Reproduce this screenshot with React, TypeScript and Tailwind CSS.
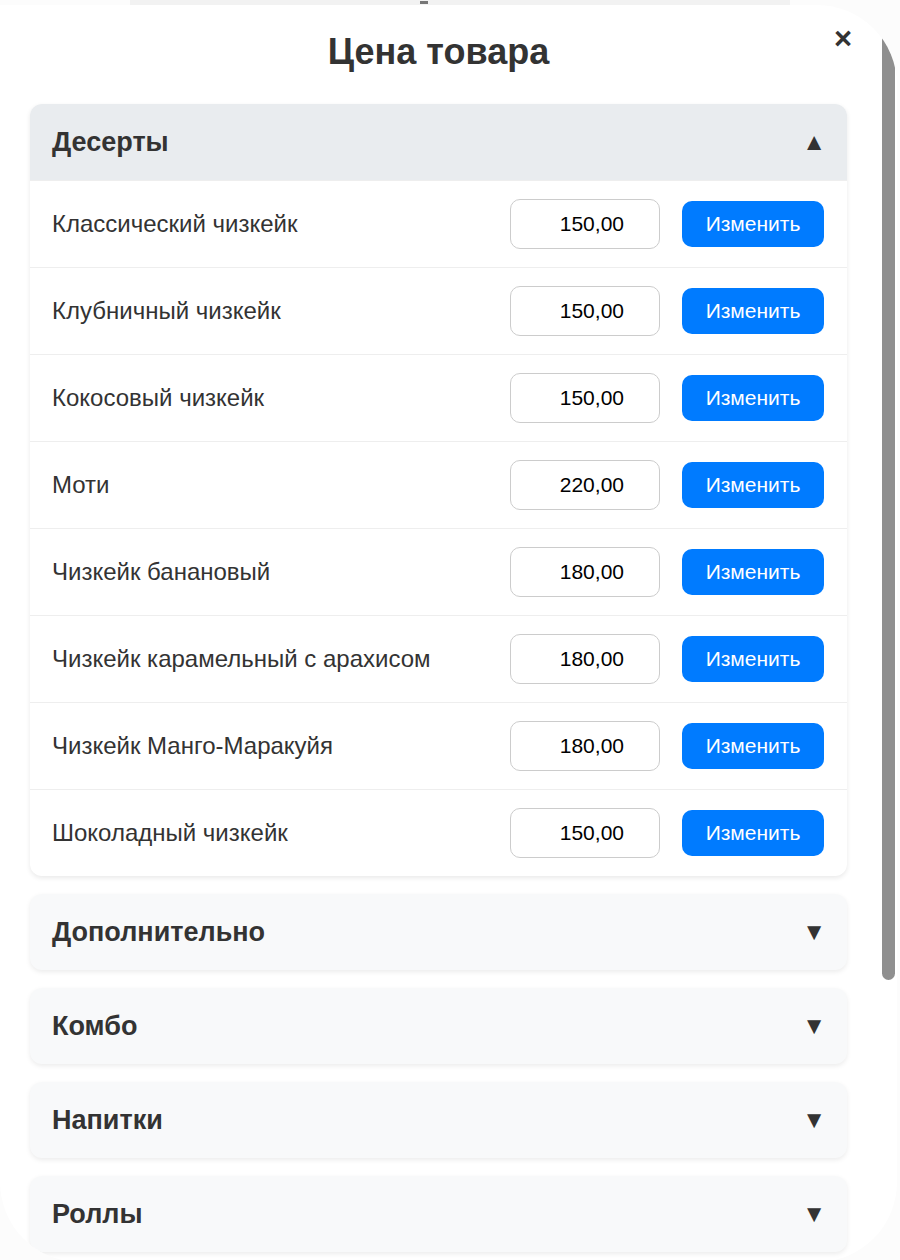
import React from "react";

const desserts = [
  { name: "Классический чизкейк", price: "150,00" },
  { name: "Клубничный чизкейк", price: "150,00" },
  { name: "Кокосовый чизкейк", price: "150,00" },
  { name: "Моти", price: "220,00" },
  { name: "Чизкейк банановый", price: "180,00" },
  { name: "Чизкейк карамельный с арахисом", price: "180,00" },
  { name: "Чизкейк Манго-Маракуйя", price: "180,00" },
  { name: "Шоколадный чизкейк", price: "150,00" },
];

const collapsed = ["Дополнительно", "Комбо", "Напитки", "Роллы"];

export default function App() {
  return (
    <div className="relative w-[900px] h-[1260px] overflow-hidden bg-[#fcfcfc] font-['Liberation_Sans',Arial,sans-serif] text-[#333]">
      <div className="absolute top-0 left-[130px] w-[660px] h-[5px] bg-[#f2f2f2]">
        <div className="absolute left-[290px] top-[1px] w-[8px] h-[3px] bg-[#777]" />
      </div>

      <div className="relative mt-[5px] w-[897px] h-[1257px] bg-white rounded-[80px] rounded-tl-none overflow-hidden pl-[30px] pr-[50px]">
        <div className="absolute right-[2px] top-0 w-[13px] h-[975px] bg-[#8f8f8f] rounded-b-full" />

        <button className="absolute top-[18px] right-[45px] text-[31px] font-bold leading-none text-[#333]">×</button>

        <h2 className="pt-[26px] h-[99px] text-center text-[36px] font-bold leading-[42px]">Цена товара</h2>

        <div className="flex flex-col gap-[18px]">
          <div className="rounded-[12px] bg-white shadow-[0_2px_5px_rgba(0,0,0,0.09)] overflow-hidden">
            <div className="flex items-center justify-between h-[77px] pl-[22px] pr-[21px] bg-[#e9ecef] border-b border-[#eeeeee]">
              <span className="text-[27px] font-bold">Десерты</span>
              <span className="text-[24px] leading-none">▲</span>
            </div>
            {desserts.map((d, i) => (
              <div
                key={d.name}
                className={
                  "flex items-center pl-[22px] pr-[23px] " +
                  (i < desserts.length - 1 ? "h-[87px] border-b border-[#eeeeee]" : "h-[86px]")
                }
              >
                <span className="flex-1 text-[24px]">{d.name}</span>
                <input
                  readOnly
                  value={d.price}
                  className="w-[150px] h-[50px] border border-[#cccccc] rounded-[10px] text-right pr-[35px] text-[21px] text-black outline-none"
                />
                <button className="ml-[22px] w-[142px] h-[46px] rounded-[10px] bg-[#007bff] text-white text-[21px]">
                  Изменить
                </button>
              </div>
            ))}
          </div>

          {collapsed.map((c) => (
            <div
              key={c}
              className="flex items-center justify-between h-[76px] pl-[22px] pr-[21px] rounded-[12px] bg-[#f8f9fa] shadow-[0_2px_5px_rgba(0,0,0,0.08)]"
            >
              <span className="text-[27px] font-bold">{c}</span>
              <span className="text-[24px] leading-none">▼</span>
            </div>
          ))}
        </div>
      </div>
    </div>
  );
}
